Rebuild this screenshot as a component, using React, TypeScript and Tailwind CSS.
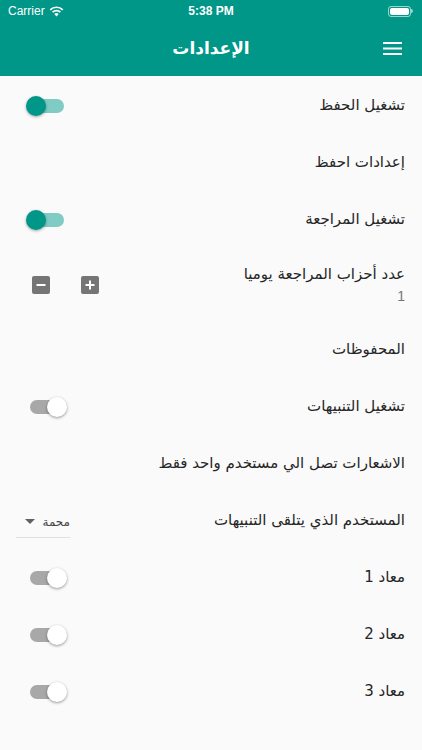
import React from "react";

const font = { fontFamily: '"DejaVu Sans", "Noto Sans", sans-serif' };

const Toggle: React.FC<{ on?: boolean }> = ({ on }) => (
  <div className="relative w-[42px] h-[22px] shrink-0" dir="ltr">
    <div
      className={`absolute left-[4px] right-[4px] top-[4px] h-[14px] rounded-full ${
        on ? "bg-[#80cbc4]" : "bg-[#a8a8a8]"
      }`}
    />
    <div
      className={`absolute top-[1px] w-[20px] h-[20px] rounded-full ${
        on
          ? "left-0 bg-[#009688] shadow-[0_1px_3px_rgba(0,0,0,0.35)]"
          : "right-[1px] bg-white shadow-[0_1px_3px_rgba(0,0,0,0.4)]"
      }`}
    />
  </div>
);

const Row: React.FC<{ label: string; children?: React.ReactNode }> = ({ label, children }) => (
  <div className="h-[57px] flex items-center justify-between pr-[17px] pl-[26px]">
    <span className="text-[15px] text-[#262626]">{label}</span>
    {children}
  </div>
);

const SquareBtn: React.FC<{ plus?: boolean }> = ({ plus }) => (
  <div className="w-[18px] h-[18px] rounded-[2px] bg-[#757575] flex items-center justify-center">
    <svg width="12" height="12" viewBox="0 0 12 12">
      <rect x="1.5" y="5" width="9" height="2" fill="#fff" />
      {plus && <rect x="5" y="1.5" width="2" height="9" fill="#fff" />}
    </svg>
  </div>
);

export default function App() {
  return (
    <div className="w-[422px] h-[750px] bg-[#fafafa] overflow-hidden" style={font}>
      {/* header */}
      <div className="bg-[#009688] h-[76px] text-white">
        <div className="h-[22px] flex items-center justify-between px-[8px] text-[12px]" style={{ fontFamily: '"Liberation Sans", sans-serif' }}>
          <div className="flex items-center gap-[4px] w-[120px]">
            <span>Carrier</span>
            <svg width="15" height="11" viewBox="0 0 15 11">
              <path d="M7.5 10.5 L5.3 8 A3.2 3.2 0 0 1 9.7 8 Z" fill="#fff" />
              <path d="M3.6 6.2 A5.6 5.6 0 0 1 11.4 6.2" stroke="#fff" strokeWidth="1.7" fill="none" />
              <path d="M1.2 3.8 A9 9 0 0 1 13.8 3.8" stroke="#fff" strokeWidth="1.7" fill="none" />
            </svg>
          </div>
          <span className="font-semibold">5:38 PM</span>
          <div className="w-[120px] flex justify-end pr-[1px]">
            <div className="flex items-center">
              <div className="w-[23px] h-[11px] rounded-[3px] border border-white/60 p-[1px]">
                <div className="w-full h-full rounded-[2px] bg-white" />
              </div>
              <div className="w-[1.5px] h-[4px] bg-white/60 rounded-r" />
            </div>
          </div>
        </div>
        <div className="h-[54px] relative flex items-center justify-center">
          <span className="text-[17px] font-bold">الإعدادات</span>
          <svg className="absolute right-[20px] top-[19px]" width="19" height="15" viewBox="0 0 19 15">
            <rect x="0" y="1" width="19" height="2" fill="#fff" />
            <rect x="0" y="6.5" width="19" height="2" fill="#fff" />
            <rect x="0" y="12" width="19" height="2" fill="#fff" />
          </svg>
        </div>
      </div>

      {/* settings list */}
      <div dir="rtl" className="pt-[1px]">
        <Row label="تشغيل الحفظ">
          <Toggle on />
        </Row>
        <Row label="إعدادات احفظ" />
        <Row label="تشغيل المراجعة">
          <Toggle on />
        </Row>
        <div className="h-[73px] flex items-center justify-between pr-[17px] pl-[32px]">
          <div className="flex flex-col">
            <span className="text-[15px] text-[#262626] leading-[22px]">عدد أحزاب المراجعة يوميا</span>
            <span className="text-[14px] text-[#757575] leading-[22px]" style={{ fontFamily: '"Liberation Sans", sans-serif' }}>1</span>
          </div>
          <div className="flex items-center gap-[31px]">
            <SquareBtn plus />
            <SquareBtn />
          </div>
        </div>
        <Row label="المحفوظات" />
        <Row label="تشغيل التنبيهات">
          <Toggle />
        </Row>
        <Row label="الاشعارات تصل الي مستخدم واحد فقط" />
        <div className="h-[57px] flex items-center justify-between pr-[17px] pl-[16px]">
          <span className="text-[15px] text-[#262626]">المستخدم الذي يتلقى التنبيهات</span>
          <div className="w-[54px] h-[32px] border-b border-[#e0e0e0] flex items-center justify-between pl-[9px] mt-[3px]">
            <span className="text-[12px] text-[#424242]">محمة</span>
            <svg width="10" height="6" viewBox="0 0 10 6">
              <path d="M0 0 L10 0 L5 5 Z" fill="#616161" />
            </svg>
          </div>
        </div>
        <Row label="معاد 1">
          <Toggle />
        </Row>
        <Row label="معاد 2">
          <Toggle />
        </Row>
        <Row label="معاد 3">
          <Toggle />
        </Row>
      </div>
    </div>
  );
}
